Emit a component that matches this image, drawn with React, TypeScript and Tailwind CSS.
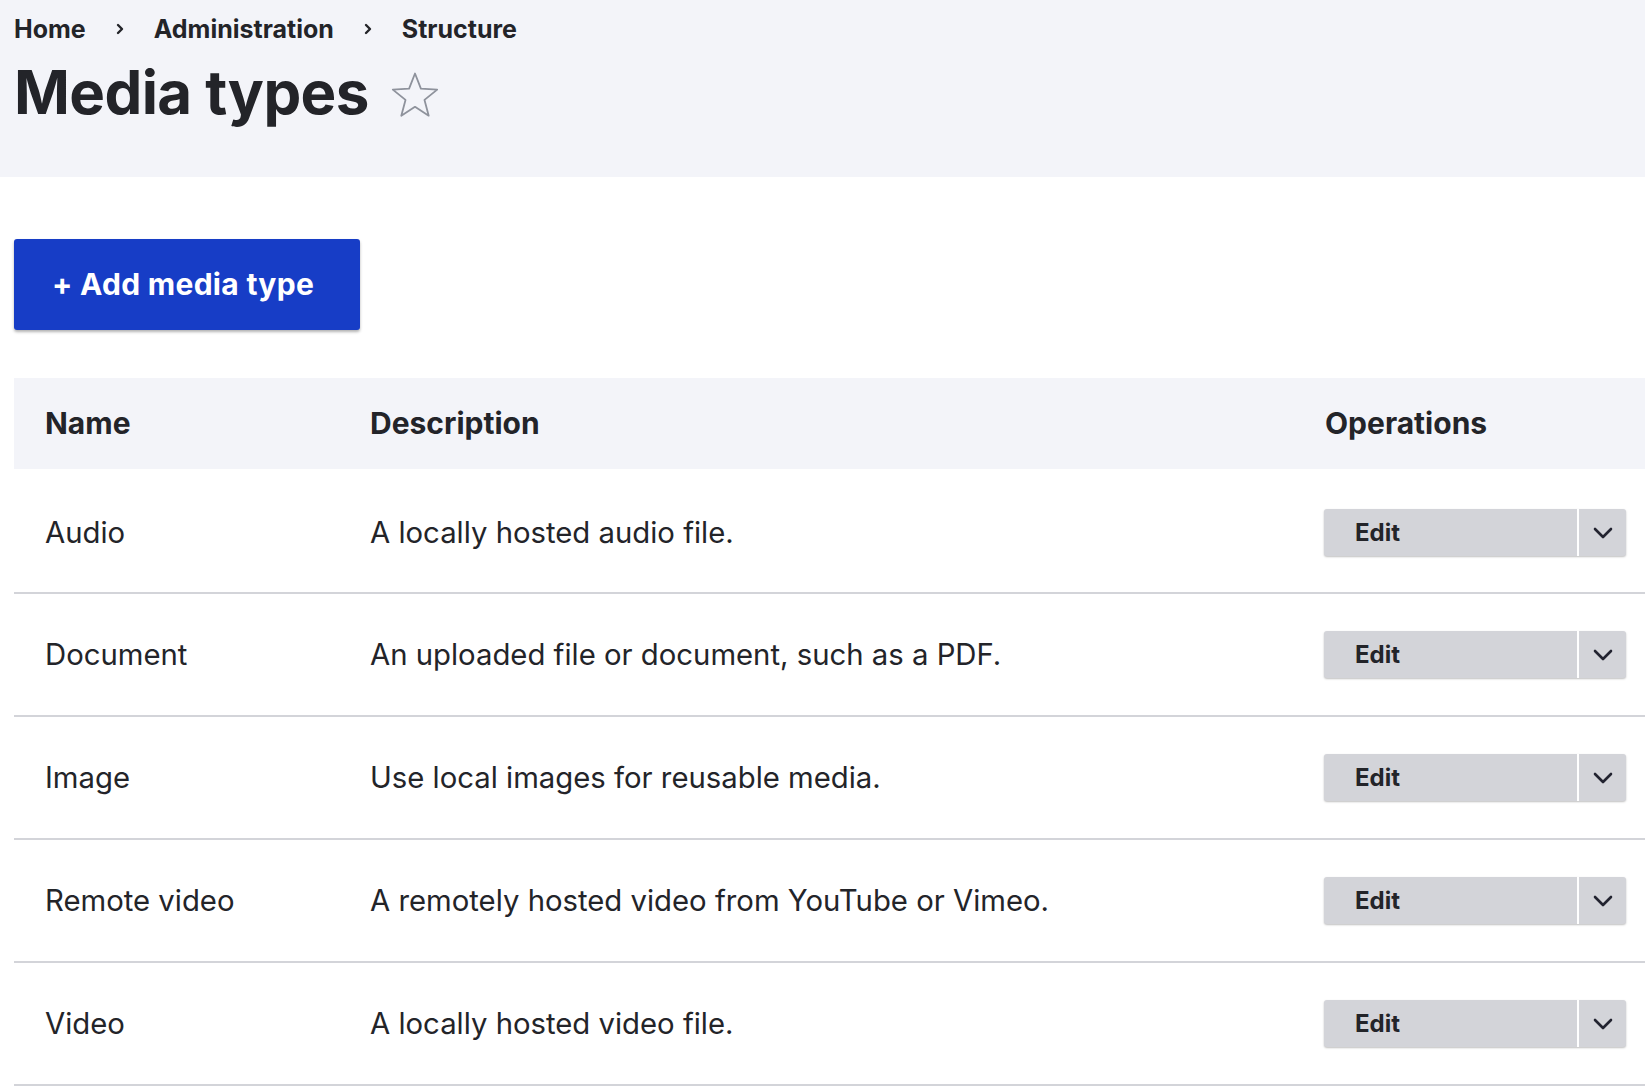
import React from 'react';

const rows = [
  { name: 'Audio', description: 'A locally hosted audio file.' },
  { name: 'Document', description: 'An uploaded file or document, such as a PDF.' },
  { name: 'Image', description: 'Use local images for reusable media.' },
  { name: 'Remote video', description: 'A remotely hosted video from YouTube or Vimeo.' },
  { name: 'Video', description: 'A locally hosted video file.' },
];

const Crumb: React.FC = () => (
  <svg width="10" height="14" viewBox="0 0 10 14" className="mx-[29px]">
    <path d="M3 3l4 4-4 4" fill="none" stroke="#232429" strokeWidth="2.4" strokeLinecap="round" strokeLinejoin="round" />
  </svg>
);

const Star: React.FC = () => (
  <svg width="48" height="48" viewBox="0 0 48 48" className="ml-[22px] mt-[4px]">
    <path
      d="M24 3.5l5.9 15.2 16.3.9-12.7 10.3 4.2 15.8L24 36.8l-13.7 8.9 4.2-15.8L1.8 19.6l16.3-.9z"
      fill="none"
      stroke="#8e929c"
      strokeWidth="1.8"
      strokeLinejoin="round"
    />
  </svg>
);

const EditButton: React.FC = () => (
  <div className="flex h-[47px] w-[302px] rounded-[3px] bg-[#d3d4d9] shadow-[0_1px_2px_rgba(0,0,0,0.25)]">
    <button className="flex-1 pl-[31px] text-left text-[24px] font-bold text-[#232429]">Edit</button>
    <div className="w-[2px] bg-white" />
    <button className="flex w-[47px] items-center justify-center">
      <svg width="22" height="14" viewBox="0 0 22 14">
        <path d="M3 3l8 8 8-8" fill="none" stroke="#222330" strokeWidth="2.6" strokeLinecap="round" strokeLinejoin="round" />
      </svg>
    </button>
  </div>
);

const App: React.FC = () => {
  return (
    <div className="min-h-screen bg-white font-['Inter',sans-serif] text-[#232429]">
      <div className="h-[177px] bg-[#f3f4f9] pl-[14px] pt-[13px]">
        <div className="flex items-center text-[25px] font-bold leading-[32px]">
          <span>Home</span>
          <Crumb />
          <span>Administration</span>
          <Crumb />
          <span>Structure</span>
        </div>
        <div className="mt-[13px] flex items-center">
          <h1 className="text-[60px] font-bold leading-[68px] tracking-[-0.6px]">Media types</h1>
          <Star />
        </div>
      </div>

      <div className="pl-[14px] pt-[62px]">
        <button className="flex h-[91px] w-[346px] items-center justify-center rounded-[3px] bg-[#173dc6] pr-[8px] text-[30px] font-bold tracking-[0.3px] text-white shadow-[0_2px_3px_rgba(0,0,0,0.3)]">
          + Add media type
        </button>

        <div className="mt-[48px]">
          <div className="grid h-[91px] grid-cols-[325px_955px_1fr] items-center bg-[#f3f4f9] text-[30px] font-bold">
            <div className="pl-[31px]">Name</div>
            <div className="pl-[31px]">Description</div>
            <div className="pl-[31px]">Operations</div>
          </div>
          {rows.map((row, i) => (
            <div
              key={row.name}
              className={
                'grid grid-cols-[325px_955px_1fr] items-center border-b-2 border-[#d3d4d9] text-[29.3px] ' +
                (i === 0 ? 'h-[125px] pt-[4px]' : 'h-[123px]')
              }
            >
              <div className="pl-[31px]">{row.name}</div>
              <div className="pl-[31px]">{row.description}</div>
              <div className="pl-[30px]">
                <EditButton />
              </div>
            </div>
          ))}
        </div>
      </div>
    </div>
  );
};

export default App;
